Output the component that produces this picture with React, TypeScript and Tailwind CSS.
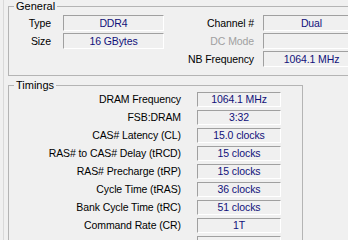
import React from "react";

const Field = ({ value, w, h = "h-[15px]", className = "" }: { value: string; w: string; h?: string; className?: string }) => (
  <div
    className={`${w} ${h} flex items-center justify-center border-t border-l border-b border-r border-t-[#a0a0a0] border-l-[#a0a0a0] border-b-white border-r-white bg-[#f0f0f0] text-[#10107a] leading-none whitespace-nowrap ${className}`}
  >
    {value}
  </div>
);

export default function App() {
  const timings: [string, string][] = [
    ["DRAM Frequency", "1064.1 MHz"],
    ["FSB:DRAM", "3:32"],
    ["CAS# Latency (CL)", "15.0 clocks"],
    ["RAS# to CAS# Delay (tRCD)", "15 clocks"],
    ["RAS# Precharge (tRP)", "15 clocks"],
    ["Cycle Time (tRAS)", "36 clocks"],
    ["Bank Cycle Time (tRC)", "51 clocks"],
    ["Command Rate (CR)", "1T"],
    ["", ""],
  ];
  return (
    <div
      className="w-[348px] h-[240px] overflow-hidden bg-[#f0f0f0] text-[10.5px] tracking-[-0.1px] text-black"
      style={{ fontFamily: '"Liberation Sans", Arial, sans-serif' }}
    >
      <div className="ml-[3px] h-full border-l border-[#d9d9d9] pl-[4px]">
        <fieldset className="w-[360px] border border-[#b4b4b4] pb-[8px]">
          <legend className="ml-[5px] px-[2px] leading-[13px] text-[11px] tracking-normal">General</legend>
          <div className="grid grid-cols-[42px_113px_90px_106px] gap-y-[2px] pt-[2px] items-center">
            <div className="text-right leading-none">Type</div>
            <Field value="DDR4" w="w-[101px]" h="h-[16px]" className="ml-[12px]" />
            <div className="text-right leading-none">Channel #</div>
            <Field value="Dual" w="w-[97px]" h="h-[16px]" className="ml-[9px]" />
            <div className="text-right leading-none">Size</div>
            <Field value="16 GBytes" w="w-[101px]" h="h-[16px]" className="ml-[12px]" />
            <div className="text-right leading-none text-[#a0a0a0]">DC Mode</div>
            <Field value="" w="w-[97px]" h="h-[16px]" className="ml-[9px]" />
            <div className="h-[16px]" />
            <div />
            <div className="text-right leading-none">NB Frequency</div>
            <Field value="1064.1 MHz" w="w-[97px]" h="h-[16px]" className="ml-[9px]" />
          </div>
        </fieldset>
        <fieldset className="mt-[3px] w-[295px] h-[200px] border border-[#b4b4b4]">
          <legend className="ml-[5px] px-[2px] leading-[13px] text-[11px] tracking-normal">Timings</legend>
          <div className="flex flex-col gap-[3px]">
            {timings.map(([label, value], i) => (
              <div key={i} className="flex items-center h-[15px]">
                <div className="w-[172px] text-right leading-none whitespace-nowrap">{label}</div>
                <Field value={value} w="w-[84px]" className="ml-[16px]" />
              </div>
            ))}
          </div>
        </fieldset>
      </div>
    </div>
  );
}
